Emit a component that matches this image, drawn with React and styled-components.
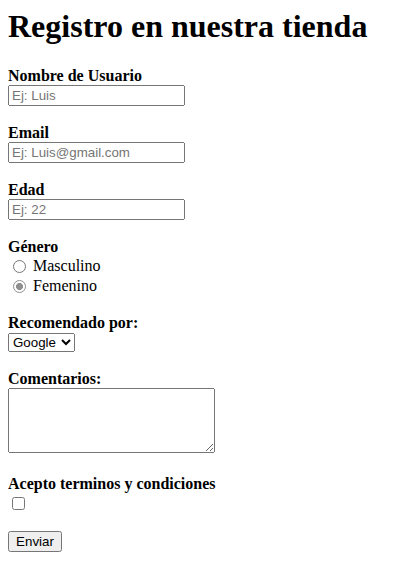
import React from 'react';
import styled, { createGlobalStyle } from 'styled-components';

const GlobalStyle = createGlobalStyle`
  body {
    margin: 8px;
    font-family: "Liberation Serif", "Times New Roman", serif;
    font-size: 16px;
    color: #000;
    background: #fff;
  }
`;

const App = () => {
  return (
    <>
      <GlobalStyle />
      <Page>
        <Title>Registro en nuestra tienda</Title>
        <Form onSubmit={(e) => e.preventDefault()}>
          <Field>
            <Label htmlFor="nombre">Nombre de Usuario</Label>
            <TextInput id="nombre" type="text" placeholder="Ej: Luis" />
          </Field>
          <Field>
            <Label htmlFor="email">Email</Label>
            <TextInput id="email" type="email" placeholder="Ej: Luis@gmail.com" />
          </Field>
          <Field>
            <Label htmlFor="edad">Edad</Label>
            <TextInput id="edad" type="number" placeholder="Ej: 22" />
          </Field>
          <Field>
            <Label as="span">Género</Label>
            <RadioRow>
              <Radio type="radio" name="genero" value="m" />
              Masculino
            </RadioRow>
            <RadioRow>
              <Radio type="radio" name="genero" value="f" defaultChecked />
              Femenino
            </RadioRow>
          </Field>
          <Field>
            <Label htmlFor="recomendado">Recomendado por:</Label>
            <Select id="recomendado" defaultValue="google">
              <option value="google">Google</option>
              <option value="amigo">Amigo</option>
              <option value="otro">Otro</option>
            </Select>
          </Field>
          <Field $space={22}>
            <Label htmlFor="comentarios">Comentarios:</Label>
            <TextArea id="comentarios" />
          </Field>
          <Field $space={21}>
            <Label htmlFor="terminos">Acepto terminos y condiciones</Label>
            <Checkbox id="terminos" type="checkbox" />
          </Field>
          <SubmitButton type="submit">Enviar</SubmitButton>
        </Form>
      </Page>
    </>
  );
};

const Page = styled.div`
  display: flex;
  flex-direction: column;
`;

const Title = styled.h1`
  margin: 0 0 21.5px;
  font-size: 32px;
  line-height: 37px;
  font-weight: bold;
`;

const Form = styled.form`
  display: flex;
  flex-direction: column;
  align-items: flex-start;
`;

const Field = styled.div`
  display: flex;
  flex-direction: column;
  align-items: flex-start;
  margin-bottom: ${(p) => p.$space ?? 18}px;
`;

const Label = styled.label`
  font-weight: bold;
  line-height: 18px;
`;

const TextInput = styled.input`
  box-sizing: border-box;
  width: 177px;
  height: 21px;
  margin: 0;
  font-family: "Liberation Sans", Arial, sans-serif;
  font-size: 13.333px;
  &::placeholder {
    color: #757575;
  }
`;

const RadioRow = styled.label`
  display: flex;
  align-items: center;
  height: 20px;
  line-height: 20px;
`;

const Radio = styled.input`
  appearance: none;
  box-sizing: border-box;
  width: 13px;
  height: 13px;
  margin: 2px 7px 0 5px;
  border: 1px solid #767676;
  border-radius: 50%;
  background: #fff;

  &:checked {
    border-color: #8f8f8f;
    background: radial-gradient(circle, #8f8f8f 0 3.2px, #fff 3.8px);
  }
`;

const Select = styled.select`
  box-sizing: border-box;
  width: 67px;
  height: 19px;
  margin: 1px 0 0;
  font-family: "Liberation Sans", Arial, sans-serif;
  font-size: 13.333px;
`;

const TextArea = styled.textarea`
  box-sizing: border-box;
  width: 207px;
  height: 65px;
  margin: 0;
  font-family: "Liberation Mono", monospace;
  font-size: 13.333px;
`;

const Checkbox = styled.input`
  width: 13px;
  height: 13px;
  margin: 4.5px 0 0 4px;
`;

const SubmitButton = styled.button`
  box-sizing: border-box;
  width: 54px;
  height: 21px;
  margin: 0;
  font-family: "Liberation Sans", Arial, sans-serif;
  font-size: 13.333px;
`;

export default App;
